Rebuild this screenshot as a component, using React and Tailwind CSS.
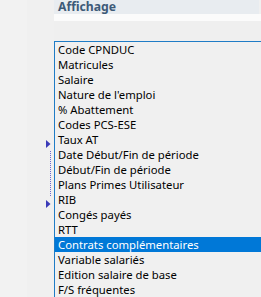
export default function App() {
  const items = [
    "Code CPNDUC",
    "Matricules",
    "Salaire",
    "Nature de l'emploi",
    "% Abattement",
    "Codes PCS-ESE",
    "Taux AT",
    "Date Début/Fin de période",
    "Début/Fin de période",
    "Plans Primes Utilisateur",
    "RIB",
    "Congés payés",
    "RTT",
    "Contrats complémentaires",
    "Variable salariés",
    "Edition salaire de base",
    "F/S fréquentes",
  ];
  const Arrow = () => (
    <div className="h-[15px] flex items-center pl-[46px]">
      <svg width="5" height="8" viewBox="0 0 5 8">
        <path d="M0 0 L4.5 4 L0 8 Z" fill="#3a3ab8" />
      </svg>
    </div>
  );
  return (
    <div
      className="w-[261px] h-[297px] overflow-hidden flex bg-[#f0f0f0]"
      style={{ fontFamily: '"Noto Sans", "Open Sans", sans-serif' }}
    >
      <div className="w-[27px] shrink-0 bg-[#dadada]" />
      <div className="w-[27px] shrink-0 bg-[#f2f2f2] flex flex-col pt-[136px] -ml-[27px] relative">
        <div className="w-[54px]">
          <Arrow />
          <div className="h-[45px] ml-[50px] border-l border-dotted border-[#6a6ad0]" />
          <Arrow />
        </div>
      </div>
      <div className="flex-1 flex flex-col min-w-0 ml-[27px]">
        <div className="h-[15px] mr-[2px] bg-[#e8ecf0] pl-[4px] flex items-start">
          <span className="text-[12.2px] leading-[14px] font-bold text-[#3d5a78] whitespace-nowrap">
            Affichage
          </span>
        </div>
        <div className="h-[7px] bg-[#fbfbfb]" />
        <div className="h-[22px] bg-[#efefef]" />
        <div className="flex-1 border-t border-l border-[#1f7cc6] bg-[#f0f0f0]">
          {items.map((t, i) => (
            <div
              key={i}
              className={
                "h-[15px] pl-[3px] text-[11.3px] leading-[15px] whitespace-nowrap " +
                (i === 13 ? "bg-[#0078d7] text-white" : "text-black")
              }
            >
              {t}
            </div>
          ))}
        </div>
      </div>
    </div>
  );
}
